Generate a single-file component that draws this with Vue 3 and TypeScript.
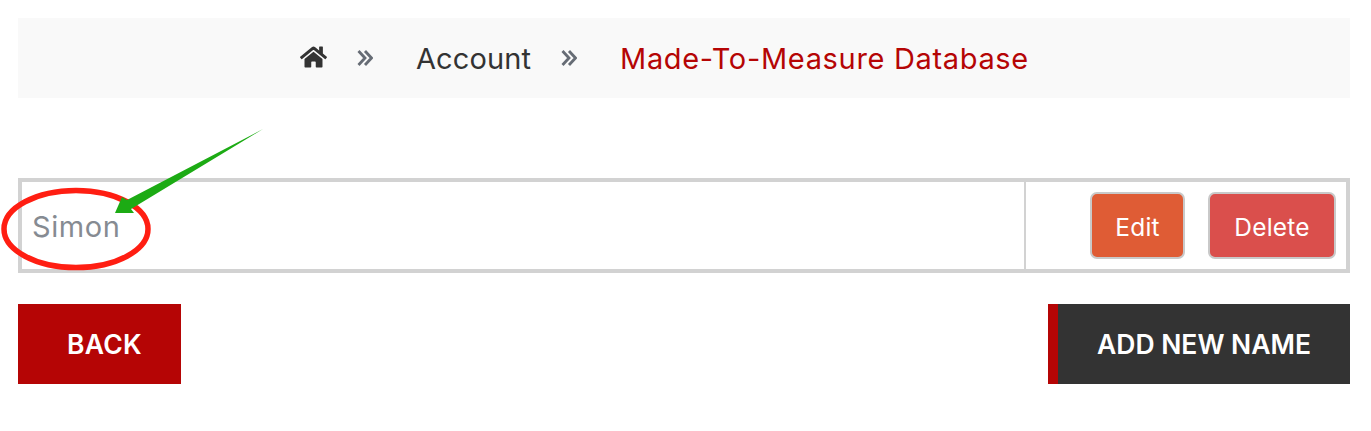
<script setup lang="ts">
const crumbs: string[] = ['Account'];
</script>

<template>
  <main class="page">
    <nav class="crumbs">
      <svg class="home" viewBox="0 0 576 512" width="27" height="24" aria-label="Home">
        <path fill="#333" d="M280.400 148.300 96 300.100V464a16 16 0 0 0 16 16l112-.3a16 16 0 0 0 15.900-16V368a16 16 0 0 1 16-16h64a16 16 0 0 1 16 16v95.600a16 16 0 0 0 16 16.100l112 .3a16 16 0 0 0 16-16V300L295.700 148.300a12.200 12.200 0 0 0-15.300 0zM571.600 251.500 488 182.600V44a12 12 0 0 0-12-12h-56a12 12 0 0 0-12 12v72.600L318.500 43a48 48 0 0 0-61 0L4.300 251.500a12 12 0 0 0-1.600 16.900l25.500 31A12 12 0 0 0 45.200 301l235.200-193.700a12.200 12.200 0 0 1 15.300 0L530.900 301a12 12 0 0 0 16.900-1.600l25.500-31a12 12 0 0 0-1.700-16.900z"/>
      </svg>
      <svg class="sep first" viewBox="0 0 16 16" width="16" height="16"><path d="M1.500 1 8 8l-6.500 7M8 1l6.500 7L8 15" fill="none" stroke="#666c75" stroke-width="2.800"/></svg>
      <span v-for="c in crumbs" :key="c" class="crumb">{{ c }}</span>
      <svg class="sep" viewBox="0 0 16 16" width="16" height="16"><path d="M1.500 1 8 8l-6.500 7M8 1l6.500 7L8 15" fill="none" stroke="#666c75" stroke-width="2.800"/></svg>
      <span class="crumb current">Made-To-Measure Database</span>
    </nav>

    <section class="table">
      <div class="name">Simon</div>
      <div class="actions">
        <button class="btn edit">Edit</button>
        <button class="btn del">Delete</button>
      </div>
    </section>

    <footer class="foot">
      <a class="back">BACK</a>
      <a class="add">ADD NEW NAME</a>
    </footer>

    <svg class="notes" viewBox="0 0 280 160" width="280" height="160">
      <ellipse cx="76" cy="109" rx="72" ry="38.500" fill="none" stroke="#ff1e12" stroke-width="5.500"/>
      <path d="M263 9 127 80 122 77 115 93 134 93 131 89Z" fill="#1cab14"/>
    </svg>
  </main>
</template>

<style>
html, body { margin: 0; background: #fff; }
</style>

<style scoped>
.page {
  position: relative;
  box-sizing: border-box;
  width: 1371px;
  height: 431px;
  padding: 18px 21px 0 18px;
  font-family: "Inter", "Liberation Sans", sans-serif;
}
.crumbs {
  display: flex;
  align-items: center;
  height: 80px;
  padding-left: 282px;
  background: #f9f9f9;
  font-size: 29px;
  color: #333;
}
.home { margin-right: 30px; margin-bottom: 2px; }
.sep { margin-right: 43px; }
.crumb { margin-right: 30px; letter-spacing: 0.1px; }
.crumb.current { color: #b50505; margin-right: 0; letter-spacing: 0.67px; }
.table {
  display: flex;
  height: 95px;
  margin-top: 80px;
  box-sizing: border-box;
  border: 4px solid #d2d2d2;
}
.name {
  flex: 1;
  display: flex;
  align-items: center;
  padding: 1px 0 0 10px;
  font-size: 29px;
  letter-spacing: 0.6px;
  color: #868b92;
  border-right: 2px solid #d2d2d2;
}
.actions {
  width: 320px;
  box-sizing: border-box;
  display: flex;
  align-items: center;
  justify-content: flex-end;
  gap: 23px;
  padding-right: 10px;
}
.btn {
  height: 67px;
  border: 2px solid #c9c9c9;
  border-radius: 7px;
  color: #fff;
  font: 400 24.5px "Inter", "Liberation Sans", sans-serif;
  letter-spacing: 0.2px;
  padding: 2px 0 0;
}
.edit { width: 95px; background: #df5c35; }
.del { width: 128px; background: #da4f4c; }
.foot {
  display: flex;
  justify-content: space-between;
  margin-top: 31px;
}
.back, .add {
  display: flex;
  align-items: center;
  justify-content: center;
  height: 80px;
  color: #fff;
  font-size: 26.5px;
  font-weight: 600;
}
.back { width: 153px; background: #b50505; border-left: 10px solid #b50505; letter-spacing: 0.3px; }
.add {
  width: 292px;
  background: #333;
  border-left: 10px solid #b50505;
}
.notes { position: absolute; left: 0; top: 120px; overflow: visible; }
</style>
